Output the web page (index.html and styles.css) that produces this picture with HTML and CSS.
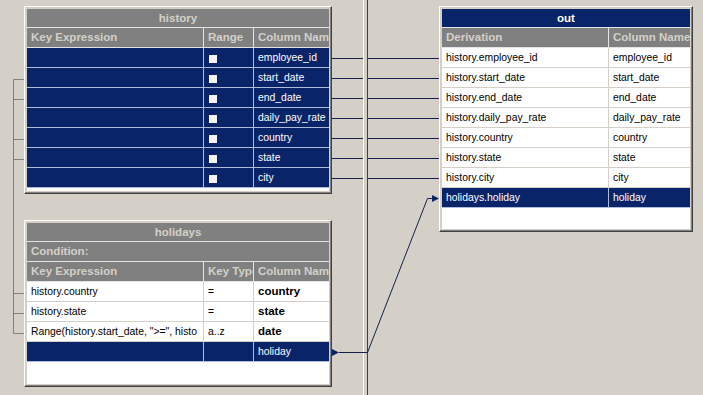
FILE: index.html
```html
<!DOCTYPE html>
<html>
<head>
<meta charset="utf-8">
<link rel="stylesheet" href="styles.css">
</head>
<body>
<div class="canvas">
  <svg class="wires" width="703" height="395" viewBox="0 0 703 395">
    <g class="splitter">
      <line x1="363.5" y1="0" x2="363.5" y2="395" stroke="#ffffff"/>
      <line x1="367.5" y1="0" x2="367.5" y2="395" stroke="#404040"/>
    </g>
    <path class="hidden-links" d="M24 79.5H13.5V333.5H24M13.5 99.5H24M13.5 139.5H24M13.5 159.5H24M13.5 293.5H24M13.5 313.5H24"/>
    <path class="links" d="M332 58.5H363M368 58.5H439M332 78.5H363M368 78.5H439M332 98.5H363M368 98.5H439M332 118.5H363M368 118.5H439M332 138.5H363M368 138.5H439M332 158.5H363M368 158.5H439M332 178.5H363M368 178.5H439"/>
    <path class="link-diag" d="M339 352.5H367.5L427.5 198.5H433"/>
    <polygon class="arrow" points="332,349 332,356 339,352.5"/>
    <polygon class="arrow" points="432,195 432,202 439,198.5"/>
  </svg>

  <section class="node node-history">
    <div class="grid grid-history">
      <div class="title">history</div>
      <div class="row cols3 row-head"><span class="cell">Key Expression</span><span class="cell">Range</span><span class="cell">Column Name</span></div>
      <div class="row cols3 row-sel"><span class="cell"></span><span class="cell"><i class="check"></i></span><span class="cell">employee_id</span></div>
      <div class="row cols3 row-sel"><span class="cell"></span><span class="cell"><i class="check"></i></span><span class="cell">start_date</span></div>
      <div class="row cols3 row-sel"><span class="cell"></span><span class="cell"><i class="check"></i></span><span class="cell">end_date</span></div>
      <div class="row cols3 row-sel"><span class="cell"></span><span class="cell"><i class="check"></i></span><span class="cell">daily_pay_rate</span></div>
      <div class="row cols3 row-sel"><span class="cell"></span><span class="cell"><i class="check"></i></span><span class="cell">country</span></div>
      <div class="row cols3 row-sel"><span class="cell"></span><span class="cell"><i class="check"></i></span><span class="cell">state</span></div>
      <div class="row cols3 row-sel"><span class="cell"></span><span class="cell"><i class="check"></i></span><span class="cell">city</span></div>
    </div>
  </section>

  <section class="node node-holidays">
    <div class="grid grid-holidays">
      <div class="title">holidays</div>
      <div class="row row-head row-cond"><span class="cell">Condition:</span></div>
      <div class="row cols3 row-head"><span class="cell">Key Expression</span><span class="cell">Key Type</span><span class="cell">Column Name</span></div>
      <div class="row cols3"><span class="cell">history.country</span><span class="cell">=</span><span class="cell bold">country</span></div>
      <div class="row cols3"><span class="cell">history.state</span><span class="cell">=</span><span class="cell bold">state</span></div>
      <div class="row cols3"><span class="cell">Range(history.start_date, "&gt;=", histo</span><span class="cell">a..z</span><span class="cell bold">date</span></div>
      <div class="row cols3 row-sel"><span class="cell"></span><span class="cell"></span><span class="cell">holiday</span></div>
    </div>
  </section>

  <section class="node node-out">
    <div class="grid grid-out">
      <div class="title title-active">out</div>
      <div class="row cols2 row-head"><span class="cell">Derivation</span><span class="cell">Column Name</span></div>
      <div class="row cols2"><span class="cell">history.employee_id</span><span class="cell">employee_id</span></div>
      <div class="row cols2"><span class="cell">history.start_date</span><span class="cell">start_date</span></div>
      <div class="row cols2"><span class="cell">history.end_date</span><span class="cell">end_date</span></div>
      <div class="row cols2"><span class="cell">history.daily_pay_rate</span><span class="cell">daily_pay_rate</span></div>
      <div class="row cols2"><span class="cell">history.country</span><span class="cell">country</span></div>
      <div class="row cols2"><span class="cell">history.state</span><span class="cell">state</span></div>
      <div class="row cols2"><span class="cell">history.city</span><span class="cell">city</span></div>
      <div class="row cols2 row-sel"><span class="cell">holidays.holiday</span><span class="cell">holiday</span></div>
    </div>
  </section>
</div>
</body>
</html>
```
FILE: styles.css
```css
html, body {
  margin: 0;
  padding: 0;
  background: #d4d0c8;
}

body {
  font-family: "Liberation Sans", Arial, sans-serif;
  font-size: 10.4px;
  color: #000;
}

.canvas {
  position: relative;
  width: 703px;
  height: 395px;
  overflow: hidden;
}

.wires {
  position: absolute;
  left: 0;
  top: 0;
}

.hidden-links {
  fill: none;
  stroke: #808080;
  stroke-width: 1;
}

.links {
  fill: none;
  stroke: #14204a;
  stroke-width: 1;
}

.link-diag {
  fill: none;
  stroke: #14204a;
  stroke-width: 1;
}

.arrow {
  fill: #0a246a;
}

.node {
  position: absolute;
  padding: 2px;
  border: 1px solid;
  border-color: #ffffff #404040 #404040 #ffffff;
  box-shadow: inset -1px -1px 0 #808080;
  background: #d4d0c8;
}

.node-history {
  left: 24px;
  top: 6px;
  width: 302px;
}

.node-holidays {
  left: 24px;
  top: 220px;
  width: 302px;
}

.node-out {
  left: 439px;
  top: 6px;
  width: 248px;
}

.grid {
  background: #ffffff;
  overflow: hidden;
}

.grid-history {
  height: 182px;
}

.grid-holidays {
  height: 161px;
}

.grid-out {
  height: 220px;
}

.title {
  height: 18px;
  line-height: 18px;
  border-bottom: 1px solid #e4e4e4;
  background: #808080;
  color: #d4d0c8;
  font-weight: bold;
  font-size: 11.5px;
  text-align: center;
}

.title-active {
  background: #0a246a;
  color: #ffffff;
}

.row {
  display: grid;
  height: 20px;
  box-sizing: border-box;
  line-height: 19px;
  border-bottom: 1px solid #d4d0c8;
}

.cols3 {
  grid-template-columns: 177px 50px 1fr;
}

.cols2 {
  grid-template-columns: 167px 1fr;
}

.cell {
  display: block;
  box-sizing: border-box;
  padding-left: 4px;
  white-space: nowrap;
  overflow: hidden;
  border-right: 1px solid #d4d0c8;
}

.cell:last-child {
  border-right: none;
}

.row-head {
  background: #808080;
  color: #d4d0c8;
  font-weight: bold;
  font-size: 11.5px;
  border-bottom-color: #e4e4e4;
}

.row-head .cell {
  border-right-color: #e4e4e4;
}

.row-cond {
  grid-template-columns: 1fr;
}

.row-sel {
  background: #0a246a;
  color: #ffffff;
  border-bottom-color: #aebcdc;
}

.row-sel .cell {
  border-right-color: #aebcdc;
}

.bold {
  font-weight: bold;
  font-size: 11.5px;
}

.check {
  display: block;
  width: 8px;
  height: 8px;
  margin: 7px 0 0 1px;
  background: #f4f4f4;
}
```
